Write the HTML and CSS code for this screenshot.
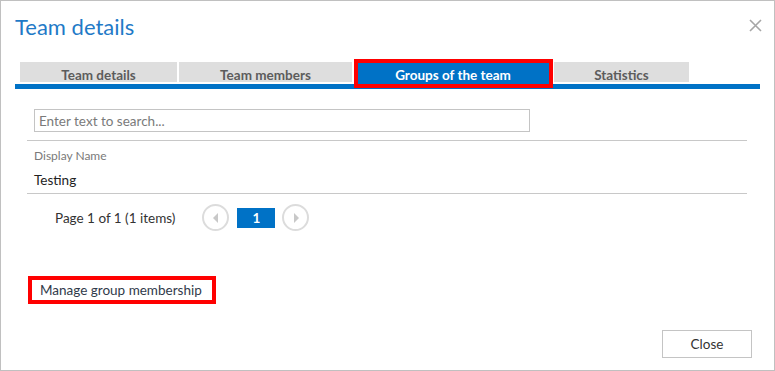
FILE: index.html
```html
<!DOCTYPE html>
<html lang="en">
<head>
    <meta charset="UTF-8">
    <meta name="viewport" content="width=device-width, initial-scale=1.0">
    <title>Team details</title>
    <link rel="stylesheet" href="styles.css">
</head>
<body>

    <div class="dialog">
        <div class="dialog-header">
            <h1>Team details</h1>
            <button class="close-x" title="Close">
                <svg width="13" height="13" viewBox="0 0 13 13">
                    <path d="M1 1 L12 12 M12 1 L1 12" stroke="#a6a6a6" stroke-width="1.6" fill="none"/>
                </svg>
            </button>
        </div>

        <div class="tabs">
            <div class="tab tab-details">Team details</div>
            <div class="tab tab-members">Team members</div>
            <div class="tab tab-groups active">Groups of the team</div>
            <div class="tab tab-stats">Statistics</div>
        </div>

        <div class="content">
            <input type="text" class="search" placeholder="Enter text to search...">

            <div class="grid">
                <div class="grid-head">Display Name</div>
                <div class="grid-row">Testing</div>
            </div>

            <div class="pager">
                <span class="pager-info">Page 1 of 1 (1 items)</span>
                <span class="pager-btn">
                    <svg width="8" height="10" viewBox="0 0 8 10"><path d="M6 0 L1 5 L6 10 Z" fill="#c8c8c8"/></svg>
                </span>
                <span class="pager-page">1</span>
                <span class="pager-btn">
                    <svg width="8" height="10" viewBox="0 0 8 10"><path d="M2 0 L7 5 L2 10 Z" fill="#c8c8c8"/></svg>
                </span>
            </div>

            <a href="#" class="manage-link">Manage group membership</a>
        </div>

        <div class="dialog-footer">
            <button class="close-button">Close</button>
        </div>
    </div>

</body>
</html>
```

FILE: styles.css
```css
body {
    margin: 0;
    font-family: Lato, "Open Sans", sans-serif;
    background-color: white;
    color: #333;
}

.dialog {
    width: 775px;
    height: 371px;
    box-sizing: border-box;
    border: 1px solid #c0c0c0;
    display: flex;
    flex-direction: column;
}

.dialog-header {
    display: flex;
    justify-content: space-between;
    align-items: flex-start;
    height: 60px;
    padding: 0 12px 0 14px;
}

.dialog-header h1 {
    margin: 12px 0 0 0;
    font-size: 22px;
    font-weight: normal;
    line-height: 28px;
    color: #1f7ac7;
}

.close-x {
    margin-top: 18px;
    padding: 0;
    border: none;
    background: none;
    cursor: pointer;
}

/* tab strip */
.tabs {
    display: flex;
    align-items: flex-end;
    gap: 2px;
    margin: 1px 14px 0 14px;
    padding-left: 5px;
    border-bottom: 5px solid #0072c6;
}

.tab {
    height: 20px;
    margin-bottom: 2px;
    box-sizing: border-box;
    padding-top: 4px;
    background-color: #dedede;
    color: #5c5c5c;
    font-size: 13.5px;
    font-weight: bold;
    text-align: center;
    line-height: 18px;
}

.tab-details { width: 157px; }
.tab-members { width: 173px; }
.tab-groups { width: 198px; }
.tab-stats { width: 135px; }

.tab.active {
    position: relative;
    height: 22px;
    margin-bottom: 0;
    padding-top: 4px;
    background-color: #0072c6;
    color: white;
}

/* red highlight round the active tab */
.tab.active::after {
    content: "";
    position: absolute;
    top: -3px;
    left: 0;
    right: -1px;
    bottom: -4px;
    border: 4px solid #ff0000;
}

.content {
    margin: 20px 27px 0 26px;
}

.search {
    display: block;
    margin-left: 7px;
    width: 496px;
    height: 23px;
    box-sizing: border-box;
    padding: 0 4px;
    border: 1px solid #c4c4c4;
    font-family: Lato, "Open Sans", sans-serif;
    font-size: 13.5px;
    color: #333;
}

.search::placeholder {
    color: #7a7a7a;
}

.grid {
    margin-top: 8px;
    border-top: 1px solid #c8c8c8;
    border-bottom: 1px solid #c8c8c8;
}

.grid-head {
    padding: 7px 0 0 7px;
    height: 20px;
    font-size: 12px;
    color: #7a7a7a;
}

.grid-row {
    padding: 0 0 0 7px;
    height: 25px;
    line-height: 25px;
    font-size: 13.5px;
    color: #222;
}

.pager {
    display: flex;
    align-items: center;
    margin-top: 10px;
    padding-left: 28px;
    font-size: 13.5px;
    color: #333;
}

.pager-info {
    margin-right: 27px;
}

.pager-btn {
    width: 27px;
    height: 27px;
    box-sizing: border-box;
    border: 2px solid #dcdcdc;
    border-radius: 50%;
    display: flex;
    align-items: center;
    justify-content: center;
}

.pager-page {
    width: 38px;
    height: 20px;
    margin: 0 7px 0 8px;
    background-color: #0072c6;
    color: white;
    font-weight: bold;
    text-align: center;
    line-height: 20px;
}

.manage-link {
    display: inline-block;
    margin-top: 45px;
    margin-left: 1px;
    padding: 0 10px 0 8px;
    height: 28px;
    box-sizing: border-box;
    border: 4px solid #ff0000;
    line-height: 20px;
    font-size: 13.5px;
    color: #2f3a4a;
    text-decoration: none;
}

.dialog-footer {
    margin-top: auto;
    display: flex;
    justify-content: flex-end;
    padding: 0 22px 12px 0;
}

.close-button {
    width: 90px;
    height: 28px;
    border: 1px solid #c4c4c4;
    background-color: white;
    font-family: Lato, "Open Sans", sans-serif;
    font-size: 13.5px;
    color: #333;
    cursor: pointer;
}
```
